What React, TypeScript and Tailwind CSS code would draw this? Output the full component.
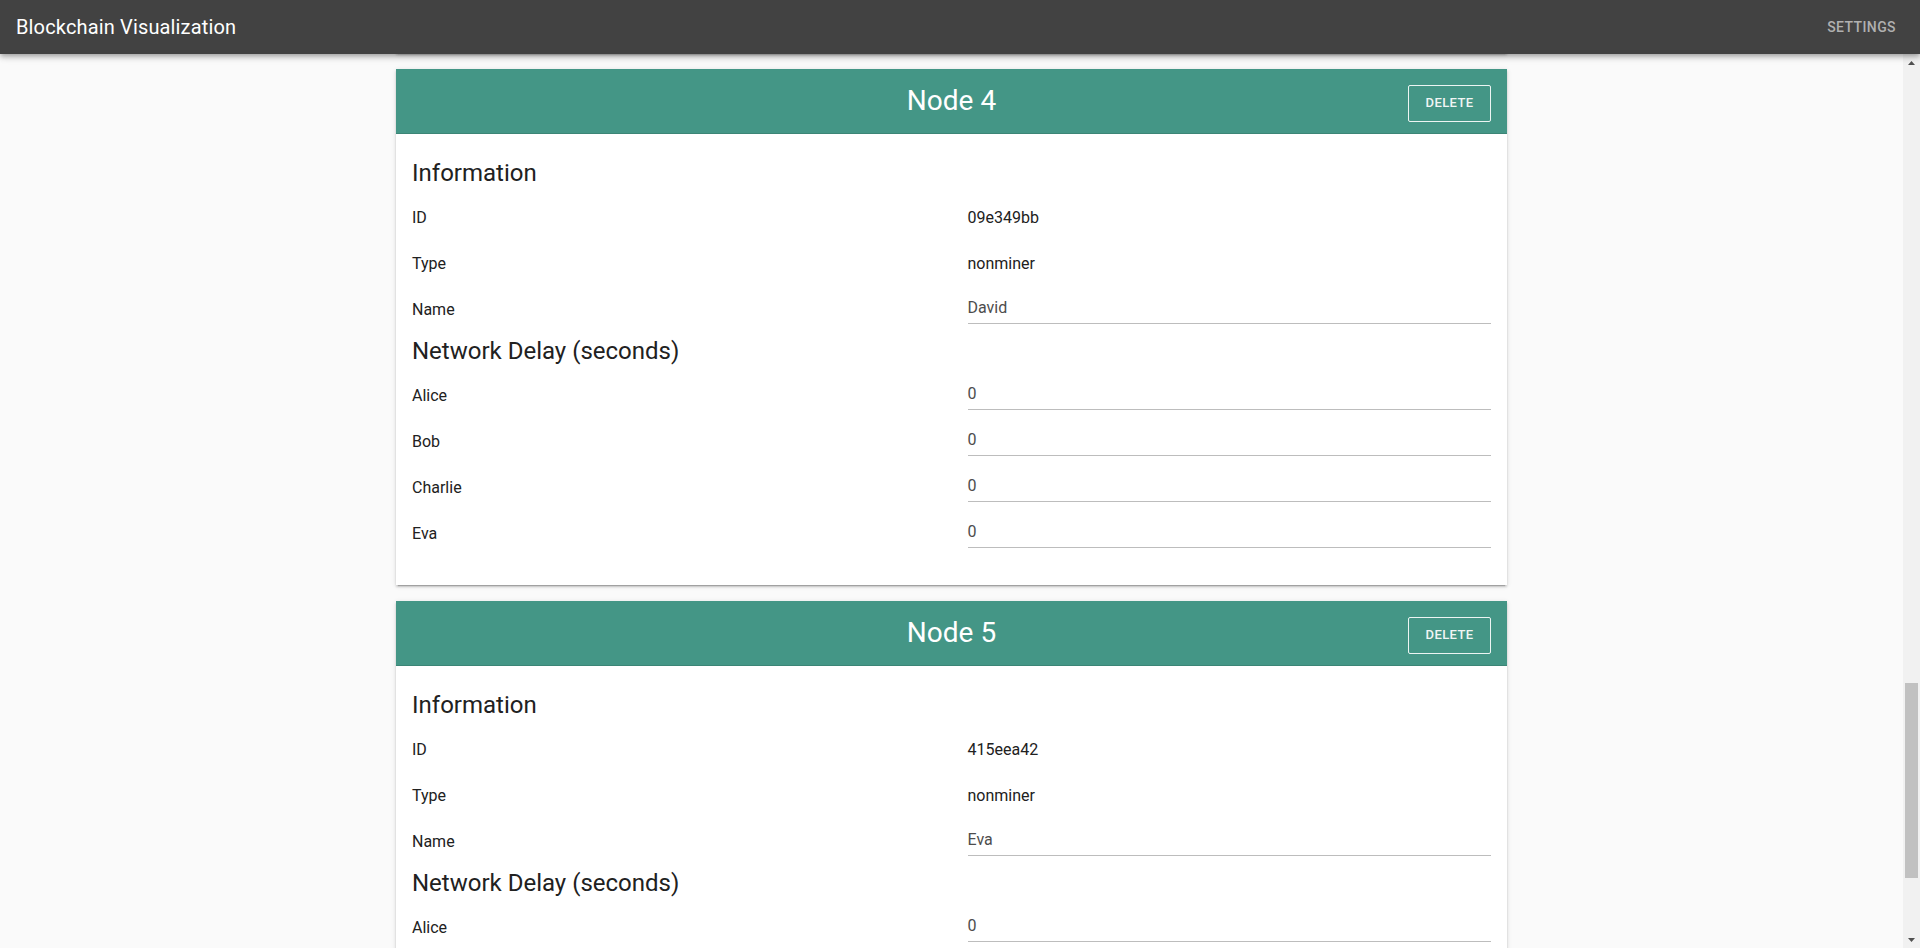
import React, { useLayoutEffect, useRef } from "react";

type NodeInfo = { n: number; id: string; type: string; name: string };

const nodes: NodeInfo[] = [
  { n: 1, id: "3f1a7c2d", type: "miner", name: "Alice" },
  { n: 2, id: "b82e5f19", type: "miner", name: "Bob" },
  { n: 3, id: "c4d90a6e", type: "nonminer", name: "Charlie" },
  { n: 4, id: "09e349bb", type: "nonminer", name: "David" },
  { n: 5, id: "415eea42", type: "nonminer", name: "Eva" },
];

function Row({ label, children }: { label: string; children: React.ReactNode }) {
  return (
    <div className="grid grid-cols-2 gap-x-8 h-[46px] items-center">
      <div className="text-base leading-6 text-[#212121]">{label}</div>
      <div>{children}</div>
    </div>
  );
}

function Field({ value }: { value: string }) {
  return (
    <div className="leading-6 text-base text-[#4d4d4d] pb-[3px] border-b border-[#bdbdbd]">
      {value}
    </div>
  );
}

const NodeCard = React.forwardRef<HTMLDivElement, { node: NodeInfo }>(({ node }, ref) => {
  const others = nodes.filter((o) => o.n !== node.n);
  return (
    <div
      ref={ref}
      className="bg-white mb-4 shadow-[0px_3px_1px_-2px_rgba(0,0,0,0.2),0px_2px_2px_0px_rgba(0,0,0,0.14),0px_1px_5px_0px_rgba(0,0,0,0.12)]"
    >
      <div className="grid grid-cols-[1fr_auto_1fr] items-center h-[65px] bg-[#449686] border-b border-[#3c8576] pl-4 pr-4">
        <div />
        <h2 className="text-[28px] leading-8 font-normal text-white">Node {node.n}</h2>
        <div className="flex justify-end">
          <button className="mt-1 h-[37px] w-[83px] border border-white/90 rounded-[2px] text-[13px] font-medium tracking-[0.03em] text-[#f0f5f4]">
            DELETE
          </button>
        </div>
      </div>
      <div className="px-4 pt-[21px] pb-[28px]">
        <h3 className="mt-[2px] mb-[6px] text-2xl leading-8 font-normal text-[#212121]">Information</h3>
        <Row label="ID">
          <div className="text-base leading-6 text-[#212121]">{node.id}</div>
        </Row>
        <Row label="Type">
          <div className="text-base leading-6 text-[#212121]">{node.type}</div>
        </Row>
        <Row label="Name">
          <Field value={node.name} />
        </Row>
        <h3 className="mt-[2px] mb-[6px] text-2xl leading-8 font-normal text-[#212121]">
          Network Delay (seconds)
        </h3>
        {others.map((o) => (
          <Row key={o.n} label={o.name}>
            <Field value="0" />
          </Row>
        ))}
      </div>
    </div>
  );
});

function ScrollBar() {
  return (
    <div className="w-[17px] shrink-0 bg-[#f1f1f1] flex flex-col">
      <div className="h-[17px] flex items-center justify-center">
        <svg width="7" height="4" viewBox="0 0 7 4">
          <path d="M3.5 0 L7 4 L0 4 Z" fill="#505050" />
        </svg>
      </div>
      <div className="h-[612px]" />
      <div className="h-[195px] mx-[2px] bg-[#c1c1c1]" />
      <div className="flex-1" />
      <div className="h-[17px] flex items-center justify-center">
        <svg width="7" height="4" viewBox="0 0 7 4">
          <path d="M0 0 L7 0 L3.5 4 Z" fill="#505050" />
        </svg>
      </div>
    </div>
  );
}

export default function App() {
  const scrollRef = useRef<HTMLDivElement>(null);
  const node4Ref = useRef<HTMLDivElement>(null);

  useLayoutEffect(() => {
    const s = scrollRef.current;
    const n = node4Ref.current;
    if (s && n) {
      s.scrollTop = n.offsetTop - 15;
    }
  }, []);

  return (
    <div className="h-screen flex flex-col bg-[#fafafa] font-['Roboto',sans-serif]">
      <header className="relative z-10 h-[54px] shrink-0 bg-[#424242] flex items-center justify-between px-4 shadow-[0px_2px_4px_-1px_rgba(0,0,0,0.2),0px_4px_5px_0px_rgba(0,0,0,0.14),0px_1px_10px_0px_rgba(0,0,0,0.12)]">
        <h1 className="text-[20px] leading-8 font-normal tracking-[0.0075em] text-white">
          Blockchain Visualization
        </h1>
        <button className="px-2 py-1.5 text-sm leading-6 font-medium uppercase tracking-[0.02857em] text-[#b0b0b0]">
          Settings
        </button>
      </header>
      <div className="flex-1 min-h-0 flex">
        <div ref={scrollRef} className="relative flex-1 overflow-hidden">
          <div className="w-[1111px] mx-auto pt-4 pb-[75px]">
            <div className="h-[1192px] mb-4" />
            {nodes.map((node) => (
              <NodeCard key={node.n} node={node} ref={node.n === 4 ? node4Ref : undefined} />
            ))}
          </div>
        </div>
        <ScrollBar />
      </div>
    </div>
  );
}
